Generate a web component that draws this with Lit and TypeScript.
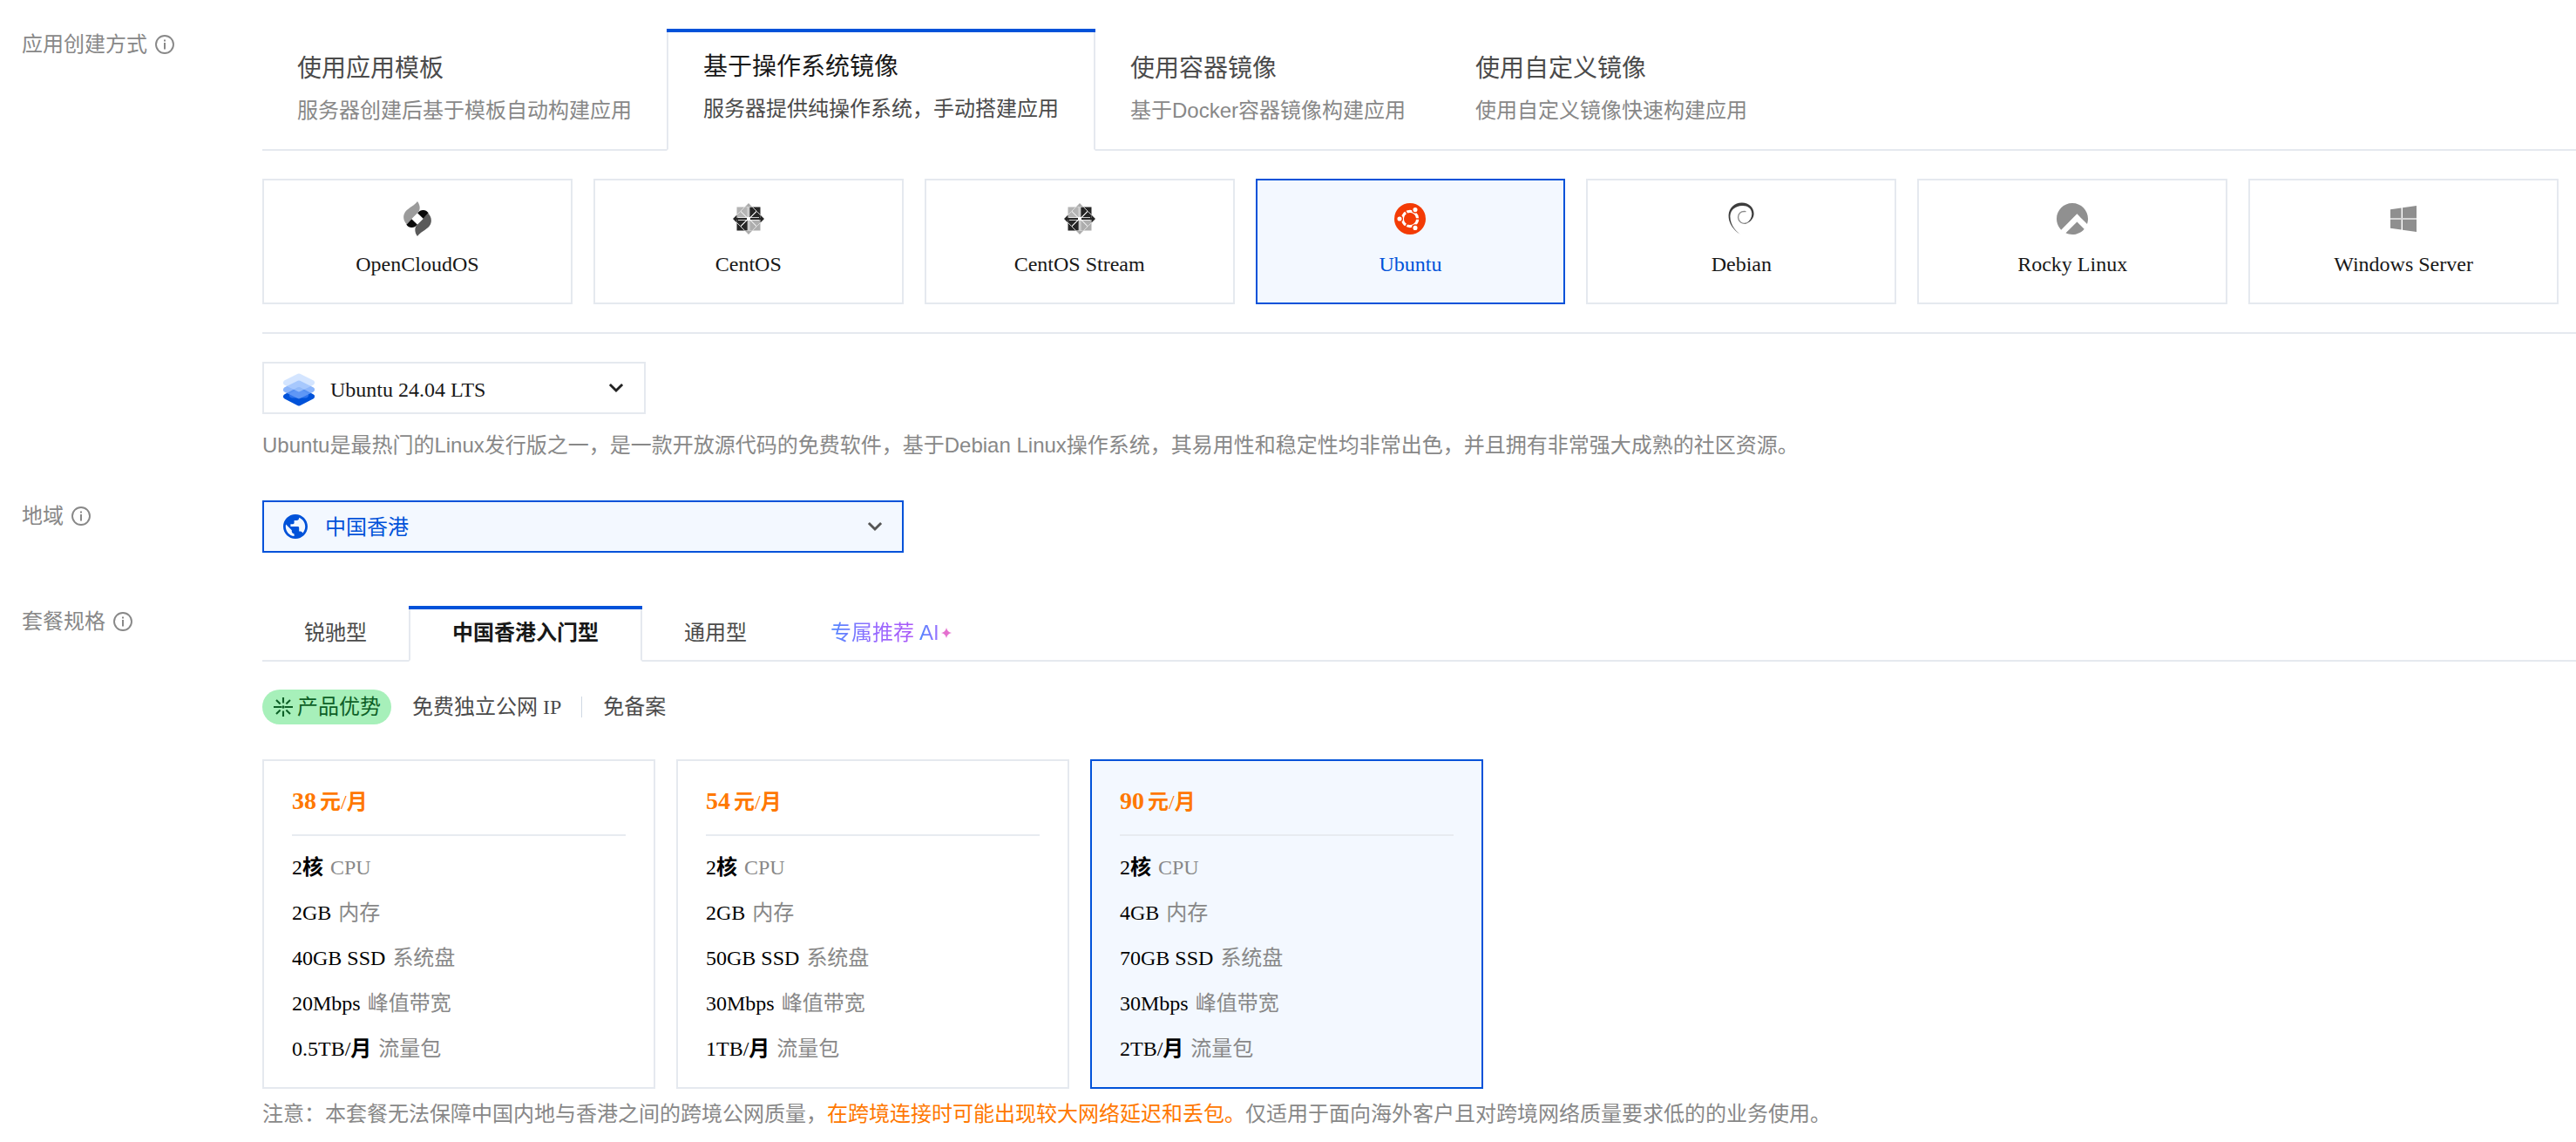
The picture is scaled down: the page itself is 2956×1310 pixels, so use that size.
import { LitElement, html, css, svg, nothing } from "lit";
import { customElement, property, state } from "lit/decorators.js";
import { classMap } from "lit/directives/class-map.js";

const openCloudIcon = html`<svg width="32" height="40" viewBox="0 0 32 40">
  <path fill="#0a0a0a" d="M16 13.5 C18 11 20 10 22.5 10 C25.5 10 27.6 11.6 28.6 13.6 L22.8 20 Z" />
  <path fill="#0a0a0a" d="M16 26.5 C14 29 12 30 9.5 30 C6.5 30 4.4 28.4 3.4 26.4 L9.2 20 Z" />
  <path fill="#9b9b9b" d="M16 0 C19.4 4.6 19.6 9.8 16.4 13.2 L3.8 26.2 C-0.6 22.4 -1.2 15.6 2.8 11 C6 7.4 13.2 4.4 16 0 Z" />
  <path fill="#5a5a5a" d="M16 40 C12.6 35.4 12.4 30.2 15.6 26.8 L28.2 13.8 C32.6 17.6 33.2 24.4 29.2 29 C26 32.6 18.8 35.6 16 40 Z" />
  <path fill="#fff" d="M16 13.4 L22.6 20 L16 26.6 L9.4 20 Z" />
</svg>`;

const centosIcon = html`<svg width="36" height="36" viewBox="-18 -18 36 36">
  <rect x="-13.5" y="-13.5" width="13.5" height="13.5" fill="#b4b4b4" />
  <rect x="0" y="-13.5" width="13.5" height="13.5" fill="#262626" />
  <rect x="-13.5" y="0" width="13.5" height="13.5" fill="#262626" />
  <rect x="0" y="0" width="13.5" height="13.5" fill="#adadad" />
  <path d="M0 -18 L4.4 -13.5 H-4.4 Z M0 18 L4.4 13.5 H-4.4 Z" fill="#b0b0b0" />
  <path d="M-18 0 L-13.5 -4.4 V4.4 Z M18 0 L13.5 -4.4 V4.4 Z" fill="#262626" />
  <g fill="none" stroke="#e2e2e2" stroke-width="0.9">
    <path d="M-4.4 -13.5 L-9 -9 L0 0 L-9 9 L-4.4 13.5 M4.4 -13.5 L9 -9 L0 0 L9 9 L4.4 13.5" />
    <path d="M-13.5 -4.4 L-9.5 -8.4 L-2 -1 M13.5 -4.4 L9.5 -8.4 L2 -1 M-13.5 4.4 L-9.5 8.4 L-2 1 M13.5 4.4 L9.5 8.4 L2 1" />
  </g>
  <path d="M0 -14 V14" stroke="#f4f4f4" stroke-width="2.6" />
  <path d="M-12 0 H12" stroke="#f4f4f4" stroke-width="3.6" />
  <path d="M0 -17 V17" stroke="#a4a4a4" stroke-width="1" />
  <path d="M-17 0 H17" stroke="#262626" stroke-width="1.8" />
  <rect x="-2" y="-2" width="4" height="4" fill="#fff" />
</svg>`;

const ubuntuIcon = html`<svg width="36" height="36" viewBox="-18 -18 36 36">
  <circle r="18" fill="#f33b05" />
  <circle r="8.6" fill="none" stroke="#fff" stroke-width="3.2" />
  <path d="M0 0 H12 M0 0 L-6 -10.4 M0 0 L-6 10.4" stroke="#f33b05" stroke-width="1.5" />
  <circle r="6.6" fill="#f33b05" />
  <g fill="#fff" stroke="#f33b05" stroke-width="1.5">
    <circle cx="-12" cy="0" r="3.3" />
    <circle cx="6" cy="-10.4" r="3.3" />
    <circle cx="6" cy="10.4" r="3.3" />
  </g>
</svg>`;

const debianIcon = html`<svg width="30" height="38" viewBox="0 0 30 38" fill="none" stroke-linecap="round">
  <path fill="#3d3d3d" d="M15.4 37.8 C7 33 0.2 24.4 0.6 14.6 C1 6 8 0.2 16 0.4 C24 0.6 29.6 6 29.6 13 C29.6 18 26 23 20 24.4 C25 21.6 27.6 17.4 27.2 12.4 C26.6 6.6 22 3.6 16 4 C8.6 4.4 3 8.4 2.4 15.6 C2 24.4 7.4 32.4 15.4 37.8 Z" />
  <path stroke="#8a8a8a" stroke-width="1.3" d="M21 24 C16 25.4 11.8 22 11.6 17.6 C11.4 13 14.4 10 20 10.6" />
</svg>`;

const rockyIcon = html`<svg width="36" height="36" viewBox="0 0 24 24">
  <path fill="#909090" d="M23.332 15.957c.433-1.239.668-2.57.668-3.957 0-6.627-5.373-12-12-12S0 5.373 0 12c0 3.28 1.315 6.251 3.447 8.417L15.62 8.245l3.005 3.005zm-2.192 3.819l-5.52-5.52L6.975 22.9c1.528.706 3.23 1.1 5.025 1.1 3.661 0 6.94-1.64 9.14-4.224z" />
</svg>`;

const windowsIcon = html`<svg width="30" height="30" viewBox="0 0 30 30">
  <path fill="#8f8f8f" d="M0 4.2 L12.6 2.5 V14.2 H0 Z M14 2.3 L30 0 V14.2 H14 Z M0 15.8 H12.6 V27.5 L0 25.8 Z M14 15.8 H30 V30 L14 27.7 Z" />
  <path fill="#d0d0d0" d="M0 14.2 H30 V15.8 H0 Z" />
</svg>`;

const layersIcon = html`<svg width="36" height="38" viewBox="0 0 36 38" stroke-linejoin="round" stroke-width="6">
  <path fill="#0052d9" stroke="#0052d9" d="M18 19 L33 26.8 L18 34.6 L3 26.8 Z" />
  <path fill="#2c72ec" stroke="#2c72ec" d="M18 21.5 L26 25.4 L18 25.6 L10 25.4 Z" />
  <path fill="#6ea2fa" stroke="#6ea2fa" opacity="0.78" d="M18 11.4 L33 19 L18 26.4 L3 19 Z" />
  <path fill="#b9d5ff" stroke="#b9d5ff" opacity="0.6" d="M18 3.4 L33 11 L18 18.4 L3 11 Z" />
</svg>`;

const globeIcon = html`<svg width="28" height="28" viewBox="2 2 20 20">
  <path fill="#0052d9" d="M12 2C6.48 2 2 6.48 2 12s4.48 10 10 10 10-4.48 10-10S17.52 2 12 2zm-1 17.93c-3.95-.49-7-3.85-7-7.93 0-.62.08-1.21.21-1.79L9 15v1c0 1.1.9 2 2 2v1.93zm6.9-2.54c-.26-.81-1-1.39-1.9-1.39h-1v-3c0-.55-.45-1-1-1H8v-2h2c.55 0 1-.45 1-1V7h2c1.1 0 2-.9 2-2v-.41c2.93 1.19 5 4.06 5 7.41 0 2.08-.8 3.97-2.1 5.39z" />
</svg>`;

const infoIcon = html`<svg width="22" height="22" viewBox="0 0 22 22">
  <circle cx="11" cy="11" r="10" fill="none" stroke="#888" stroke-width="1.9" />
  <path fill="#888" d="M10 5.4 h2 v2 h-2 Z M10 9 h2 v7.6 h-2 Z" />
</svg>`;

const burstIcon = html`<svg width="22" height="22" viewBox="-11 -11 22 22">
  <g stroke="#0e6027" stroke-width="2.1" fill="none">
    <path d="M0 -11 V-4.4 M0 4.4 V11 M-11 0 H-2 M2 0 H11" />
    <path d="M-8 -8 L-3.4 -3.4 M8 -8 L3.4 -3.4 M-8 8 L-3.4 3.4 M8 8 L3.4 3.4" />
  </g>
  <circle r="1.7" fill="#0e6027" />
</svg>`;

const chevron = (color: string) => html`<svg class="chevron" width="18" height="12" viewBox="0 0 18 12">
  ${svg`<path d="M1.9 2 L9 9 L16.1 2" fill="none" stroke=${color} stroke-width="2.9" />`}
</svg>`;

const base = css`
  :host {
    display: block;
    --blue: #0052d9;
    --line: #e5e9ef;
    --tint: #f3f8ff;
    --sans: "Liberation Sans", "Noto Sans CJK SC", sans-serif;
    --serif: "Liberation Serif", "Noto Sans CJK SC", serif;
  }
  * {
    box-sizing: border-box;
  }
  svg {
    display: block;
    flex: none;
  }
`;

interface CreateMode {
  title: string;
  note: string;
}

interface Plan {
  price: number;
  memory: string;
  disk: string;
  bandwidth: string;
  traffic: string;
}

const MODES: CreateMode[] = [
  { title: "使用应用模板", note: "服务器创建后基于模板自动构建应用" },
  { title: "基于操作系统镜像", note: "服务器提供纯操作系统，手动搭建应用" },
  { title: "使用容器镜像", note: "基于Docker容器镜像构建应用" },
  { title: "使用自定义镜像", note: "使用自定义镜像快速构建应用" },
];

const SYSTEMS = [
  { name: "OpenCloudOS", icon: openCloudIcon },
  { name: "CentOS", icon: centosIcon },
  { name: "CentOS Stream", icon: centosIcon },
  { name: "Ubuntu", icon: ubuntuIcon },
  { name: "Debian", icon: debianIcon },
  { name: "Rocky Linux", icon: rockyIcon },
  { name: "Windows Server", icon: windowsIcon },
];

const PLANS: Plan[] = [
  { price: 38, memory: "2GB", disk: "40GB SSD", bandwidth: "20Mbps", traffic: "0.5TB/" },
  { price: 54, memory: "2GB", disk: "50GB SSD", bandwidth: "30Mbps", traffic: "1TB/" },
  { price: 90, memory: "4GB", disk: "70GB SSD", bandwidth: "30Mbps", traffic: "2TB/" },
];

@customElement("form-row")
export class FormRow extends LitElement {
  @property() label = "";

  static styles = [
    base,
    css`
      :host {
        display: flex;
      }
      .label {
        flex: none;
        display: flex;
        align-items: center;
        gap: 9px;
        width: 276px;
        height: 36px;
        font: 24px/36px var(--sans);
        color: #888;
      }
      .content {
        flex: 1;
        min-width: 0;
      }
    `,
  ];

  render() {
    return html`<div class="label"><span>${this.label}</span>${infoIcon}</div>
      <div class="content"><slot></slot></div>`;
  }
}

@customElement("plan-card")
export class PlanCard extends LitElement {
  @property({ attribute: false }) plan!: Plan;
  @property({ type: Boolean, reflect: true }) selected = false;

  static styles = [
    base,
    css`
      :host {
        width: 451px;
        height: 378px;
        padding: 26px 32px 0;
        border: 2px solid var(--line);
        font: 24px/52px var(--serif);
        color: #000;
        cursor: pointer;
        box-sizing: border-box;
      }
      :host([selected]) {
        border-color: var(--blue);
        background: var(--tint);
      }
      .price {
        display: flex;
        align-items: baseline;
        gap: 4px;
        height: 60px;
        padding-bottom: 18px;
        border-bottom: 2px solid #e7ebf0;
        margin-bottom: 10px;
        color: #ff7800;
        line-height: 40px;
      }
      .amount {
        font-size: 28px;
        font-weight: 700;
      }
      .unit,
      .strong {
        font-weight: 500;
      }
      .cjk {
        font-weight: 600;
      }
      .spec {
        display: flex;
        gap: 8px;
        white-space: pre;
      }
      .name {
        color: #888;
      }
    `,
  ];

  private spec(value: string, unit: string, name: string) {
    return html`<div class="spec">
      <span class="strong">${value}${unit ? html`<span class="cjk">${unit}</span>` : nothing}</span><span class="name">${name}</span>
    </div>`;
  }

  render() {
    const p = this.plan;
    return html`<div class="price">
        <span class="amount">${p.price}</span>
        <span class="unit"><span class="cjk">元</span>/<span class="cjk">月</span></span>
      </div>
      ${this.spec("2", "核", "CPU")} ${this.spec(p.memory, "", "内存")} ${this.spec(p.disk, "", "系统盘")}
      ${this.spec(p.bandwidth, "", "峰值带宽")} ${this.spec(p.traffic, "月", "流量包")}`;
  }
}

@customElement("app-root")
export class AppRoot extends LitElement {
  @state() private mode = 1;
  @state() private system = 3;
  @state() private series = 1;
  @state() private selectedPlan = 2;

  static styles = [
    base,
    css`
      :host {
        height: 1310px;
        padding: 33px 0 0 25px;
        overflow: hidden;
        background: #fff;
        box-sizing: border-box;
        font: 24px/36px var(--sans);
        color: #888;
      }
      .region-row {
        margin-top: 45px;
      }
      .series-row {
        margin-top: 61px;
      }
      .tabs {
        display: flex;
        white-space: nowrap;
      }
      .tabs::after {
        content: "";
        flex: 1;
        border-bottom: 2px solid var(--line);
      }
      .tab {
        display: flex;
        flex-direction: column;
        cursor: pointer;
      }
      .body {
        flex: 1;
        border-bottom: 2px solid var(--line);
      }
      .bar {
        display: none;
        height: 4px;
        background: var(--blue);
      }
      .active .bar {
        display: block;
      }
      .active .body {
        border: 2px solid var(--line);
        border-top: 0;
        border-bottom-color: #fff;
      }
      .modes {
        height: 140px;
      }
      .modes .body {
        padding: 25px 40px 0;
      }
      .modes .active .body {
        padding-top: 19px;
      }
      .title {
        font-size: 28px;
        line-height: 42px;
        color: #4b4b4b;
      }
      .note {
        margin-top: 9px;
      }
      .active .title {
        color: #181818;
      }
      .active .note {
        color: #4b4b4b;
      }
      .systems {
        display: grid;
        grid-template-columns: repeat(7, 1fr);
        gap: 24px;
        margin: 32px 20px 32px 0;
      }
      .system {
        display: flex;
        flex-direction: column;
        align-items: center;
        gap: 16px;
        height: 144px;
        padding-top: 26px;
        border: 2px solid var(--line);
        font-family: var(--serif);
        color: #181818;
        cursor: pointer;
      }
      .system.selected {
        border-color: var(--blue);
        background: var(--tint);
        color: var(--blue);
      }
      .logo {
        display: flex;
        align-items: center;
        justify-content: center;
        width: 36px;
        height: 36px;
      }
      .rule {
        height: 2px;
        background: var(--line);
        margin-bottom: 32px;
      }
      .select {
        display: flex;
        align-items: center;
        height: 60px;
        padding: 0 22px;
        border: 2px solid var(--line);
      }
      .select .chevron {
        margin-left: auto;
      }
      .version {
        width: 440px;
        padding-right: 23px;
        gap: 18px;
        font-family: var(--serif);
        color: #181818;
      }
      .version > svg:first-child,
      .version > span {
        margin-top: 4px;
      }
      .version .chevron,
      .region .chevron {
        margin-bottom: 1px;
      }
      .about {
        margin-top: 18px;
      }
      .region {
        width: 736px;
        gap: 20px;
        border-color: var(--blue);
        background: var(--tint);
        color: var(--blue);
      }
      .region > span {
        margin-top: 1px;
      }
      .series {
        height: 64px;
      }
      .series .body {
        padding: 13px 48px 0;
        color: #4b4b4b;
      }
      .series .active .body {
        padding-top: 9px;
        color: #181818;
        font-weight: 700;
      }
      .ai {
        display: flex;
        align-items: center;
        gap: 6px;
      }
      .grad {
        background: linear-gradient(90deg, #4f86ff, #9a6bff 55%, #a955f7);
        -webkit-background-clip: text;
        background-clip: text;
        color: transparent;
      }
      .grad.short {
        background-image: linear-gradient(90deg, #4f86ff, #a070ff);
      }
      .spark {
        margin-left: -4px;
      }
      .benefits {
        display: flex;
        align-items: center;
        height: 40px;
        margin: 32px 0 40px;
        font-family: var(--serif);
        color: #4b4b4b;
      }
      .pill {
        display: flex;
        align-items: center;
        gap: 5px;
        height: 40px;
        padding: 0 12px 0 13px;
        margin-right: 24px;
        border-radius: 20px;
        background: #a7f0ba;
        color: #0e6027;
      }
      .sep {
        width: 1px;
        height: 24px;
        margin: 0 24px 0 23px;
        background: #cfd8e3;
      }
      .plans {
        display: flex;
        gap: 24px;
      }
      .warning {
        margin-top: 11px;
        white-space: nowrap;
      }
      .warning em {
        font-style: normal;
        color: #ff7800;
      }
    `,
  ];

  private seriesLabel(i: number) {
    if (i < 3) return html`${["锐驰型", "中国香港入门型", "通用型"][i]}`;
    return html`<span class="ai"
      ><span class="grad">专属推荐</span><span class="grad short">AI</span
      ><svg class="spark" width="12" height="12" viewBox="0 0 12 12">
        <path fill="#e470cf" d="M6 0 C6.8 3.6 8.4 5.2 12 6 C8.4 6.8 6.8 8.4 6 12 C5.2 8.4 3.6 6.8 0 6 C3.6 5.2 5.2 3.6 6 0 Z" /></svg
    ></span>`;
  }

  render() {
    return html`
      <form-row label="应用创建方式">
        <div class="tabs modes">
          ${MODES.map(
            (m, i) => html`<div class=${classMap({ tab: true, active: i === this.mode })} @click=${() => (this.mode = i)}>
              <div class="bar"></div>
              <div class="body">
                <div class="title">${m.title}</div>
                <div class="note">${m.note}</div>
              </div>
            </div>`,
          )}
        </div>
        <div class="systems">
          ${SYSTEMS.map(
            (s, i) => html`<div
              class=${classMap({ system: true, selected: i === this.system })}
              @click=${() => (this.system = i)}
            >
              <div class="logo">${s.icon}</div>
              <span>${s.name}</span>
            </div>`,
          )}
        </div>
        <div class="rule"></div>
        <div class="select version">${layersIcon}<span>Ubuntu 24.04 LTS</span>${chevron("#222")}</div>
        <div class="about">
          Ubuntu是最热门的Linux发行版之一，是一款开放源代码的免费软件，基于Debian Linux操作系统，其易用性和稳定性均非常出色，并且拥有非常强大成熟的社区资源。
        </div>
      </form-row>

      <form-row class="region-row" label="地域">
        <div class="select region">${globeIcon}<span>中国香港</span>${chevron("#555")}</div>
      </form-row>

      <form-row class="series-row" label="套餐规格">
        <div class="tabs series">
          ${[0, 1, 2, 3].map(
            (i) => html`<div class=${classMap({ tab: true, active: i === this.series })} @click=${() => (this.series = i)}>
              <div class="bar"></div>
              <div class="body">${this.seriesLabel(i)}</div>
            </div>`,
          )}
        </div>
        <div class="benefits">
          <div class="pill">${burstIcon}<span>产品优势</span></div>
          <span>免费独立公网 IP</span>
          <div class="sep"></div>
          <span>免备案</span>
        </div>
        <div class="plans">
          ${PLANS.map(
            (p, i) => html`<plan-card
              .plan=${p}
              ?selected=${i === this.selectedPlan}
              @click=${() => (this.selectedPlan = i)}
            ></plan-card>`,
          )}
        </div>
        <div class="warning">
          注意：本套餐无法保障中国内地与香港之间的跨境公网质量，<em>在跨境连接时可能出现较大网络延迟和丢包。</em>仅适用于面向海外客户且对跨境网络质量要求低的的业务使用。
        </div>
      </form-row>
    `;
  }
}
